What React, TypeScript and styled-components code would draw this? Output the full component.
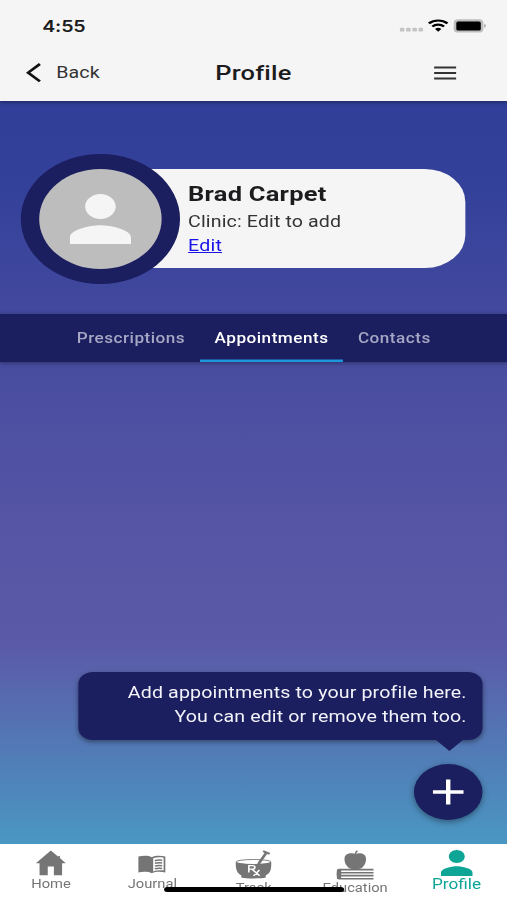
import React from "react";
import styled, { createGlobalStyle } from "styled-components";

const NAVY = "#1b1e5f";

const GlobalStyle = createGlobalStyle`
  * { box-sizing: border-box; }
  html, body { margin: 0; padding: 0; overflow: hidden; }
  body { font-family: Roboto, "Liberation Sans", sans-serif; color: #1c1c1e; }
`;

const Viewport = styled.div`
  width: 507px;
  height: 900px;
  overflow: hidden;
`;

/* A 414px wide phone canvas, widened to fill the viewport. */
const Phone = styled.div`
  width: 414px;
  height: 900px;
  display: flex;
  flex-direction: column;
  transform: scaleX(1.22464);
  transform-origin: 0 0;
  position: relative;
  background: linear-gradient(
    #313f9a 101px,
    #34419a 190px,
    #494da0 370px,
    #5554a5 520px,
    #5b5aa8 645px,
    #4a97c2 843px
  );
`;

const Header = styled.header`
  height: 101px;
  background: #f5f5f5;
  box-shadow: 0 1px 4px rgba(0, 0, 0, 0.45);
`;

const StatusBar = styled.div`
  height: 44px;
  padding: 9px 17.5px 0 34.5px;
  display: flex;
  justify-content: space-between;

  svg {
    margin-top: 8px;
  }
`;

const Time = styled.span`
  font: 600 16px/34px Inter, sans-serif;
  letter-spacing: -0.15px;
`;

const AppBar = styled.div`
  height: 57px;
  display: grid;
  grid-template-columns: 1fr 80px 1fr;
  align-items: center;
  padding: 0 41.5px 0 20px;
`;

const BackButton = styled.button`
  display: flex;
  align-items: center;
  gap: 10px;
  border: 0;
  padding: 1px 0 0;
  background: none;
  font: 400 16px/24px Roboto, sans-serif;
  letter-spacing: 0.05px;
  color: #333;
`;

const Title = styled.h1`
  margin: 0 0 0 19.5px;
  font: 500 20.8px/24px Roboto, sans-serif;
  letter-spacing: 0.15px;
  white-space: nowrap;
`;

const MenuButton = styled.button`
  justify-self: end;
  border: 0;
  padding: 0;
  background: none;
  display: flex;
`;

const ProfileArea = styled.section`
  height: 213px;
  padding: 52.5px 34px 0 17px;
  display: flex;
`;

const Avatar = styled.div`
  width: 129.6px;
  height: 130px;
  flex: none;
  border: 15px solid ${NAVY};
  border-radius: 50%;
  background: #bdbdbd;
  display: flex;
  justify-content: center;
  align-items: center;
  z-index: 1;
`;

const Card = styled.div`
  flex: 1;
  height: 99px;
  margin: 15.5px 0 0 -50px;
  padding: 11px 0 0 57px;
  border-radius: 0 33px 33px 0;
  background: #f5f5f5;
`;

const Name = styled.h2`
  margin: 0;
  font: 700 20.8px/28px Roboto, sans-serif;
  letter-spacing: 0.2px;
`;

const Clinic = styled.p`
  margin: 2.4px 0 0;
  font-size: 16px;
  line-height: 24px;
  letter-spacing: 0.1px;
  color: #333;
`;

const EditLink = styled.a`
  display: block;
  width: max-content;
  font-size: 16px;
  line-height: 24px;
  letter-spacing: 0.15px;
  color: #1a12e8;
  text-decoration: underline;
`;

const Tabs = styled.nav`
  height: 48px;
  display: flex;
  justify-content: center;
  padding-left: 0.4px;
  background: ${NAVY};
  box-shadow: 0 1px 4px rgba(0, 0, 0, 0.4);
`;

const Tab = styled.button<{ $active?: boolean }>`
  border: 0;
  padding: 0 12px;
  background: none;
  box-shadow: inset 0 -2.5px ${(p) => (p.$active ? "#1e96dc" : "transparent")};
  font: 500 14px/46px Roboto, sans-serif;
  letter-spacing: 0.4px;
  color: ${(p) => (p.$active ? "#fff" : "#a5a7c4")};
`;

const Content = styled.main`
  flex: 1;
  display: flex;
  flex-direction: column;
  justify-content: flex-end;
  align-items: flex-end;
  padding: 0 20px 23.5px 0;
`;

const Bubble = styled.div`
  position: relative;
  width: 330.5px;
  height: 68px;
  margin-bottom: 24.5px;
  padding: 9.8px 13px 0;
  border-radius: 12px;
  background: ${NAVY};
  box-shadow: 0 2px 5px rgba(0, 0, 0, 0.4);
  color: #f3f3fa;
  text-align: right;
  font-size: 16px;
  line-height: 24px;
  letter-spacing: 0.11px;

  &::after {
    content: "";
    position: absolute;
    right: 15.5px;
    top: 67px;
    border: 12.5px solid transparent;
    border-top-color: ${NAVY};
    border-bottom: 0;
  }
`;

const AddButton = styled.button`
  width: 56px;
  height: 56px;
  border: 0;
  padding: 0;
  border-radius: 50%;
  background: ${NAVY};
  box-shadow: 0 2px 6px rgba(0, 0, 0, 0.4);
  display: flex;
  align-items: center;
  justify-content: center;
`;

const BottomNav = styled.nav`
  height: 56.5px;
  display: grid;
  grid-template-columns: repeat(5, 1fr);
  background: #fff;
`;

const NavItem = styled.a<{ $active?: boolean; $drop?: number }>`
  display: flex;
  flex-direction: column;
  align-items: center;
  padding: 6.4px 0 0 0.4px;
  color: ${(p) => (p.$active ? "#0ea596" : "#757575")};
  font-size: ${(p) => (p.$active ? 14 : 12)}px;
  line-height: 16px;

  svg {
    flex: none;
    margin-bottom: ${(p) => p.$drop ?? 0}px;
  }
`;

const HomeIndicator = styled.div`
  position: absolute;
  left: 133.7px;
  top: 887px;
  width: 147px;
  height: 5px;
  border-radius: 3px;
  background: #000;
`;

const StatusIcons = () => (
  <svg width="71" height="18" viewBox="0 0 71 18">
    <g fill="#c4c4c6">
      <rect x="0.5" y="10.8" width="3.8" height="3.8" rx="1.2" />
      <rect x="5.6" y="10.8" width="3.8" height="3.8" rx="1.2" />
      <rect x="10.7" y="10.8" width="3.8" height="3.8" rx="1.2" />
      <rect x="15.7" y="10.8" width="3.8" height="3.8" rx="1.2" />
    </g>
    <g fill="none" stroke="#000" strokeWidth="2.2">
      <path d="M24.2 6.4a11.4 11.4 0 0 1 15.2 0" />
      <path d="M27 9.5a7.2 7.2 0 0 1 9.6 0" />
    </g>
    <path d="M29.2 12a3.9 3.9 0 0 1 5.2 0L31.8 14.8z" fill="#000" />
    <rect x="44.5" y="2.3" width="24.2" height="13.2" rx="3.6" fill="#bdbdbf" />
    <rect x="46.6" y="4.4" width="20" height="9" rx="1.5" fill="#000" />
    <path d="M69.4 6.8c1.7.7 1.7 3.5 0 4.2z" fill="#a8a8aa" />
  </svg>
);

const PersonIcon = ({ width, height, color }: { width: number; height: number; color: string }) => (
  <svg width={width} height={height} viewBox="4 4 16 16" preserveAspectRatio="none" fill={color}>
    <path d="M12 12c2.21 0 4-1.79 4-4s-1.79-4-4-4-4 1.79-4 4 1.79 4 4 4zm0 2c-2.67 0-8 1.34-8 4v2h16v-2c0-2.66-5.33-4-8-4z" />
  </svg>
);

const HomeIcon = () => (
  <svg width="25" height="26" viewBox="0 0 25 26" fill="currentColor">
    <path d="M12.5.5 18.6 6.8V6h1.3v2.1L24.7 13.2H21.7V25.2H15V16.5h-5v8.7H3.3V13.2H.3z" />
  </svg>
);

const JournalIcon = () => (
  <svg width="24" height="26" viewBox="0 0 24 26">
    <path d="M1 6.6C4.5 5.4 9 5.3 12 7.2c3-1.9 7.5-1.8 11-.6V22.5c-3.5-1-8-1-11 .8-3-1.8-7.5-1.8-11-.8z" fill="currentColor" />
    <path d="M13.1 8.3c2.5-1.3 5.7-1.3 8.5-.6V20.6c-2.8-.6-6-.4-8.5.8z" fill="#fff" />
    <path d="M14.5 10.7c1.9-.8 3.8-.8 5.9-.4M14.5 13.4c1.9-.8 3.8-.8 5.9-.4M14.5 16.1c1.9-.8 3.8-.8 5.9-.4M14.5 18.8c1.9-.8 3.8-.8 5.9-.4" stroke="currentColor" strokeWidth="1.5" fill="none" />
  </svg>
);

const TrackIcon = () => (
  <svg width="30" height="29" viewBox="0 0 30 29">
    <ellipse cx="15" cy="12" rx="14.3" ry="2.5" fill="#fff" stroke="currentColor" strokeWidth=".8" />
    <path d="M.5 12c4 2.9 25 2.9 29 0 .3 7.500-1 11.600-4.500 13.200V27.500c-4 1.200-16 1.200-20 0V25.200C1.500 23.500.2 19 .5 12z" fill="currentColor" />
    <path d="M19 14 25.3 3" stroke="currentColor" strokeWidth="2.4" fill="none" />
    <path d="M23.3.3l5.4 2.8-1 1.6-5.3-2.6z" fill="currentColor" />
    <path
      d="M11.2 22.5v-6.8h2.9c2.7 0 2.7 3.5 0 3.5h-2.9m2.6 0 6.2 6.5M19.9 20l-4.9 5.8"
      fill="none"
      stroke="#fff"
      strokeWidth="1.3"
    />
  </svg>
);

const EducationIcon = () => (
  <svg width="32" height="30" viewBox="0 0 32 30">
    <path d="M16.3 4.3C18.5 2.6 24.9 2.5 24.9 9.2c0 4.6-2.9 9.7-5.8 9.7h-5.6C10.3 18.9 7.3 13.8 7.3 9.2c0-6.7 6.5-6.5 9-4.9z" fill="currentColor" />
    <path d="M15.9 4.9c0-1.7.8-3.1 2-4.1" stroke="currentColor" strokeWidth="1.3" fill="none" />
    <path d="M31 18.8H2.6c-2.2 0-2.2 10.6 0 10.6H31v-1.4H4.6v-7.6H31z" fill="currentColor" />
    <path d="M4 22.7h27M4 25.6h27" stroke="currentColor" strokeWidth="1.6" />
    <path d="M1.1 19.4h3.100v9.600H1.100z" fill="currentColor" />
  </svg>
);

export default function App() {
  return (
    <Viewport>
      <GlobalStyle />
      <Phone>
        <Header>
          <StatusBar>
            <Time>4:55</Time>
            <StatusIcons />
          </StatusBar>
          <AppBar>
            <BackButton>
              <svg width="16" height="20" viewBox="0 0 16 20" fill="none" stroke="#111" strokeWidth="2.4">
                <path d="M12.6 1 3 9.7l9.6 8.7" />
              </svg>
              Back
            </BackButton>
            <Title>Profile</Title>
            <MenuButton aria-label="Menu">
              <svg width="19" height="14" viewBox="0 0 19 14" stroke="#333" strokeWidth="1.9">
                <path d="M.5 1.5h18M.5 7h18M.5 12.5h18" />
              </svg>
            </MenuButton>
          </AppBar>
        </Header>
        <ProfileArea>
          <Avatar>
            <PersonIcon width={50} height={50} color="#f5f5f5" />
          </Avatar>
          <Card>
            <Name>Brad Carpet</Name>
            <Clinic>Clinic: Edit to add</Clinic>
            <EditLink>Edit</EditLink>
          </Card>
        </ProfileArea>
        <Tabs>
          <Tab>Prescriptions</Tab>
          <Tab $active>Appointments</Tab>
          <Tab>Contacts</Tab>
        </Tabs>
        <Content>
          <Bubble>
            Add appointments to your profile here.
            <br />
            You can edit or remove them too.
          </Bubble>
          <AddButton aria-label="Add appointment">
            <svg width="26" height="26" viewBox="0 0 26 26" stroke="#fff" strokeWidth="3.6">
              <path d="M.5 13h25M13 .5v25" />
            </svg>
          </AddButton>
        </Content>
        <BottomNav>
          <NavItem>
            <HomeIcon />
            Home
          </NavItem>
          <NavItem>
            <JournalIcon />
            Journal
          </NavItem>
          <NavItem $drop={1}>
            <TrackIcon />
            Track
          </NavItem>
          <NavItem>
            <EducationIcon />
            Education
          </NavItem>
          <NavItem $active>
            <PersonIcon width={26} height={26} color="#0ea596" />
            Profile
          </NavItem>
        </BottomNav>
        <HomeIndicator />
      </Phone>
    </Viewport>
  );
}
